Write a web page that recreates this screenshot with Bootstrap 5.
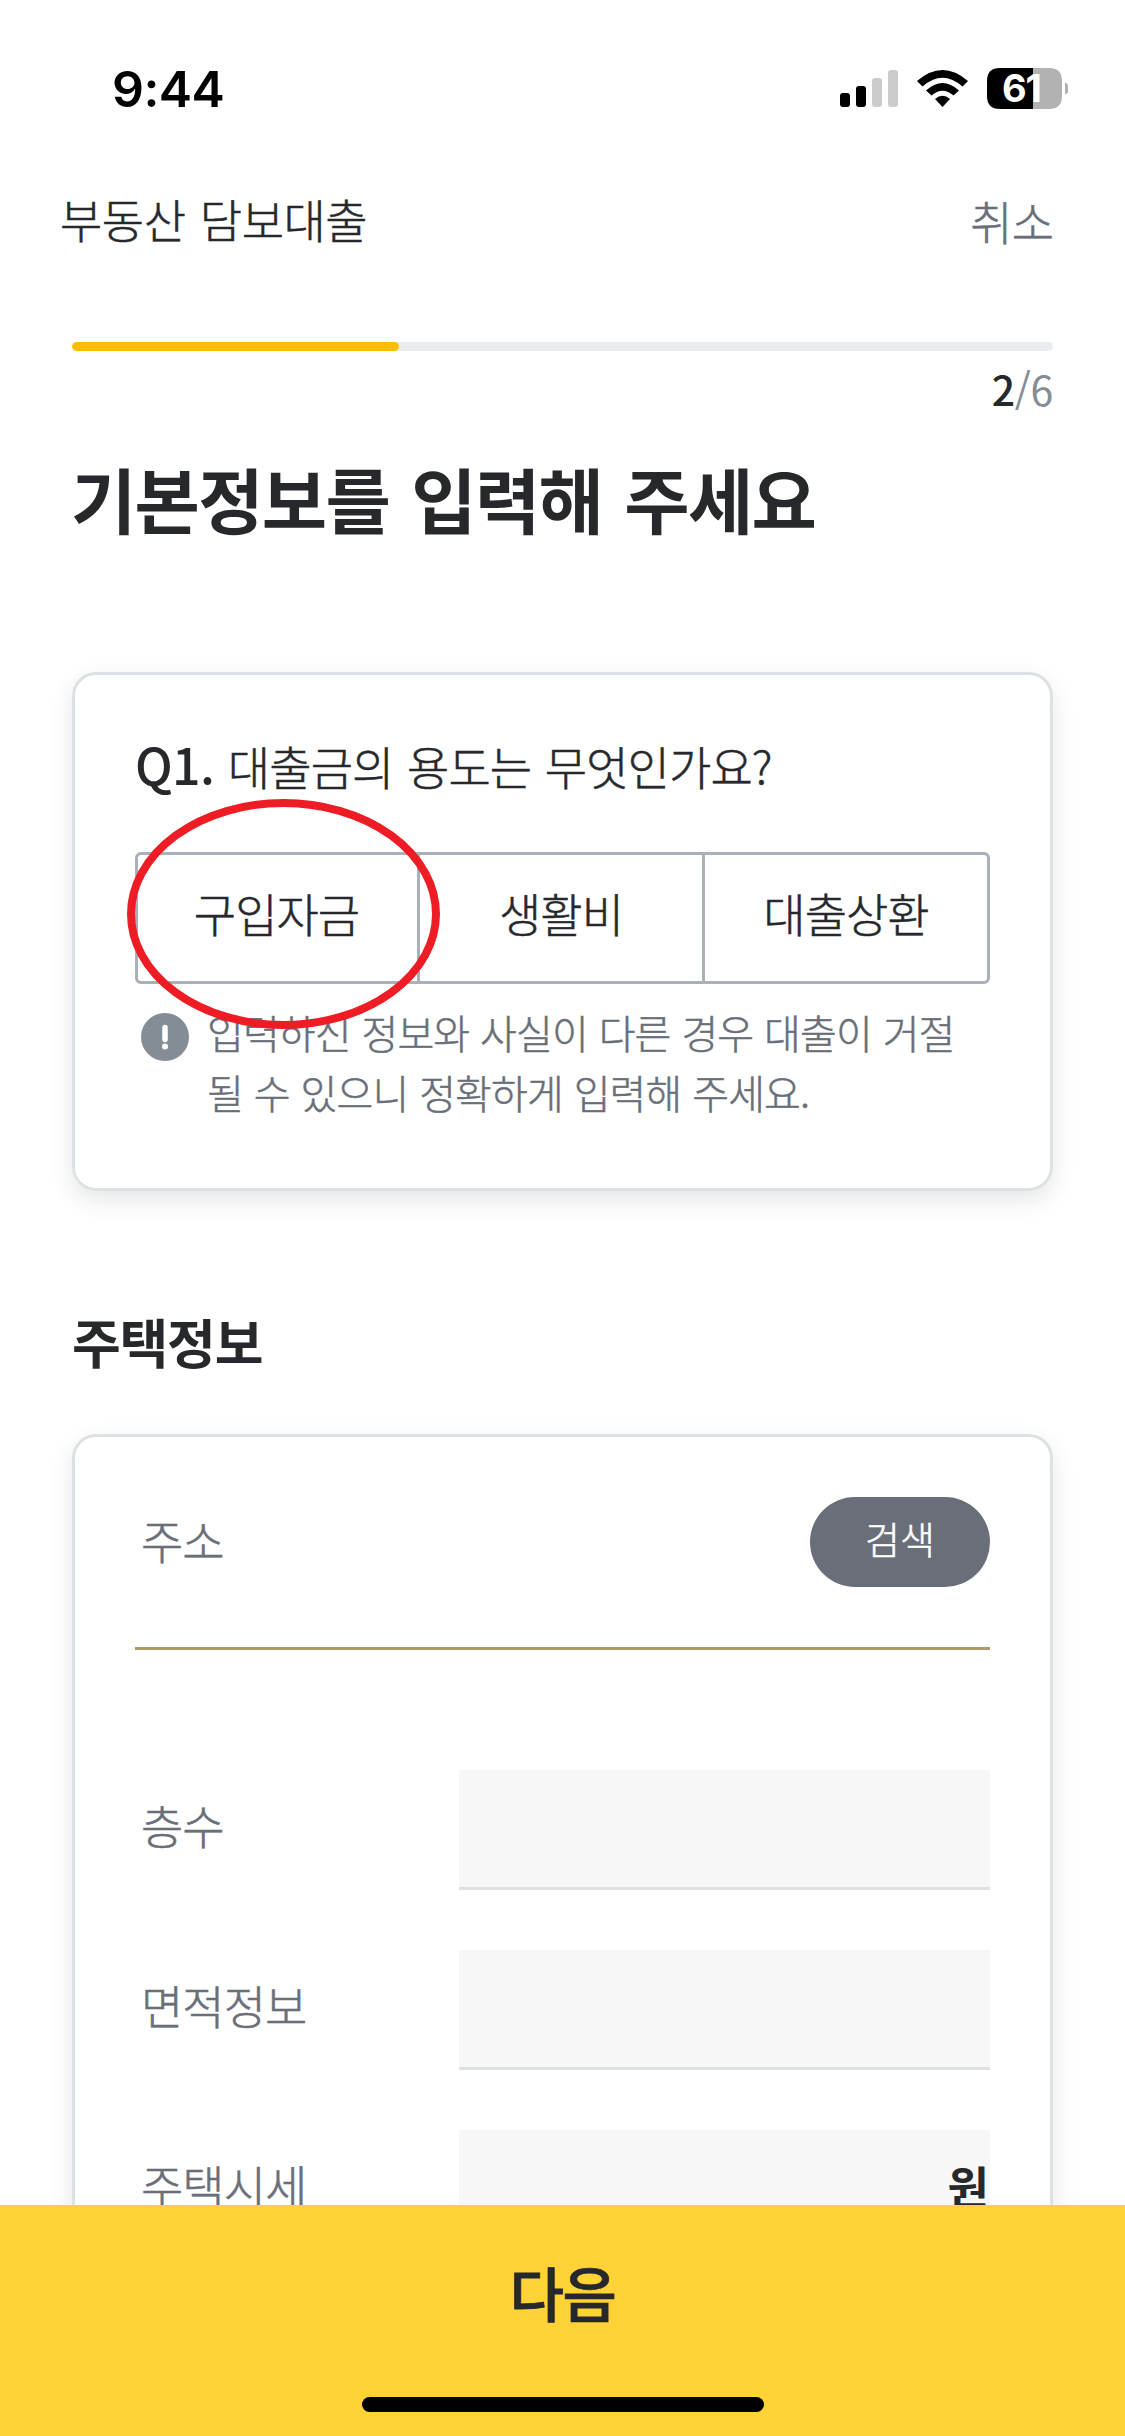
<!DOCTYPE html>
<html lang="ko">
<head>
<meta charset="utf-8">
<meta name="viewport" content="width=device-width, initial-scale=1">
<title>부동산 담보대출</title>
<link href="https://cdn.jsdelivr.net/npm/bootstrap@5.3.0/dist/css/bootstrap.min.css" rel="stylesheet">
<style>
  body { font-family: "Noto Sans CJK KR", "Noto Sans", sans-serif; color: #26282c; background: #fff; }
  .screen { width: 1125px; height: 2436px; }
  .ko { white-space: nowrap; font-weight: 300; }
  .thin { -webkit-text-stroke: .5px currentColor; }
  .statusbar { height: 177px; padding: 0 57px 0 112px; }
  .clock { font: 600 50px/60px Inter, sans-serif; color: #000; margin-top: 59px; letter-spacing: -.6px; }
  .status-icons { margin-top: 60px; }
  .appbar { height: 90px; padding: 0 72px 7px 60px; }
  .appbar .ko { font-size: 46px; line-height: 83px; letter-spacing: -.5px; word-spacing: 2px; }
  .appbar .tone-gray { letter-spacing: -1px; padding-top: 3px; }
  .tone-gray { color: #696e78; }
  .content { padding: 75px 72px 0; }
  .steps { height: 9px; border-radius: 5px; background: #e9edf0; }
  .steps .progress-bar { background: #ffbc00; border-radius: 5px; }
  .counter { font: 400 41px/60px "Noto Sans CJK KR", sans-serif; height: 60px; margin-top: 7px; color: #848c96; letter-spacing: -.3px; }
  .counter b { color: #26282c; font-weight: 500; }
  .headline { font-size: 71px; line-height: 100px; font-weight: 700; margin: 29px 0 0 -1px; letter-spacing: -1.7px; word-spacing: 4px; }
  .panel { border: 3px solid #dde1e4; border-radius: 24px; box-shadow: 0 9px 24px rgba(0,0,0,.1); padding: 0 60px; }
  .panel-question { height: 519px; margin-top: 125px; }
  .question { font-size: 46px; line-height: 70px; margin-top: 55px; letter-spacing: -.9px; word-spacing: 1.5px; }
  .question b { font-weight: 500; font-size: 50px; line-height: 1; letter-spacing: -.6px; -webkit-text-stroke: 0; }
  .choices { height: 132px; margin-top: 52px; }
  .choices .btn { border: 3px solid #a9b0ba; border-radius: 6px; font-size: 46px; letter-spacing: -1px; font-weight: 300; color: #26282c; padding: 0 0 12px; flex: 1 1 0; }
  .choices .btn:first-child { flex: 0 0 285px; padding-right: 2px; }
  .choices.btn-group > .btn:not(:first-child) { margin-left: -3px; }
  .ring { left: 123px; top: 795px; }
  .notice { margin-top: 18px; padding-left: 6px; gap: 18px; }
  .notice svg { margin-top: 11px; }
  .notice .ko { font-size: 40px; line-height: 60px; letter-spacing: -.9px; word-spacing: .6px; }
  .section-title { font-size: 53px; line-height: 80px; font-weight: 700; margin-top: 110px; letter-spacing: -1.2px; }
  .panel-form { margin-top: 53px; height: 1100px; }
  .field-label { font-size: 46px; line-height: 84px; letter-spacing: -1px; padding-left: 6px; color: #696e78; }
  .address { padding-top: 60px; height: 210px; }
  .address-wrap { border-bottom: 3px solid #b0986a; margin-bottom: 120px; }
  .search { width: 180px; height: 90px; border-radius: 45px; background: #696e78; color: #fff; font-size: 38px; font-weight: 300; padding: 0 0 8px; line-height: 76px; }
  .entry { height: 120px; margin-bottom: 60px; }
  .entry .field-label { padding-bottom: 13px; }
  .entry .box { width: 531px; background: #f7f7f7; border-bottom: 3px solid #dde1e4; }
  .unit { font-size: 45px; font-weight: 700; padding: 0 1px 5px 0; }
  .footer-bar { height: 231px; background: #ffd235; }
  .footer-bar .next { font-size: 59px; font-weight: 500; line-height: 90px; margin-top: 42px; letter-spacing: -1.5px; -webkit-text-stroke: .8px currentColor; }
  .home { width: 402px; height: 15px; border-radius: 8px; background: #000; margin-top: 60px; }
</style>
</head>
<body>
<div class="screen position-relative overflow-hidden">
  <header>
    <div class="statusbar d-flex justify-content-between align-items-start">
      <div class="clock">9:44</div>
      <svg class="status-icons" width="230" height="56" viewBox="838 60 230 56">
        <rect x="840" y="93" width="10" height="14" rx="3"/>
        <rect x="856" y="86" width="10" height="21" rx="3"/>
        <rect x="872" y="78" width="10" height="29" rx="3" fill="#ccc"/>
        <rect x="888" y="70" width="10" height="37" rx="3" fill="#ccc"/>
        <path d="M917 81Q942.500 59 968 81L962.500 86.500Q942.500 69 922.500 86.500Z"/>
        <path d="M926 90.500Q942.500 75.500 959 90.500L953.500 95.500Q942.500 86 931.500 95.500Z"/>
        <path d="M935 99Q942.500 92.500 950 99L942.500 107Z"/>
        <path d="M1000 68H1033V109H1000Q987 109 987 96V81Q987 68 1000 68Z"/>
        <path d="M1033 68H1049Q1062 68 1062 81V96Q1062 109 1049 109H1033Z" fill="#b2b2b2"/>
        <path d="M1065 82.500Q1069 84 1069 88.500T1065 94.500Z" fill="#b2b2b2"/>
        <text x="1002" y="102" font-family="Inter, sans-serif" font-size="38" font-weight="700" fill="#fff" textLength="40">61</text>
      </svg>
    </div>
    <nav class="appbar d-flex justify-content-between align-items-center">
      <span class="ko thin">부동산 담보대출</span>
      <span class="ko thin tone-gray">취소</span>
    </nav>
  </header>

  <main class="content">
    <div class="progress steps"><div class="progress-bar" style="width:33.3%"></div></div>
    <div class="counter text-end"><b>2</b>/6</div>
    <h1 class="ko headline">기본정보를 입력해 주세요</h1>

    <section class="panel panel-question d-flex flex-column">
      <div class="ko thin question"><b>Q1.</b> 대출금의 용도는 무엇인가요?</div>
      <div class="btn-group choices">
        <button class="btn thin" type="button">구입자금</button>
        <button class="btn thin" type="button">생활비</button>
        <button class="btn thin" type="button">대출상환</button>
      </div>
      <div class="notice d-flex align-items-start tone-gray">
        <svg width="48" height="48" viewBox="0 0 48 48"><circle cx="24" cy="24" r="24" fill="#848c96"/><path d="M24 14.500V26.500" stroke="#fff" stroke-width="5.500" stroke-linecap="round"/><circle cx="24" cy="33.500" r="3" fill="#fff"/></svg>
        <div class="ko thin">입력하신 정보와 사실이 다른 경우 대출이 거절<br>될 수 있으니 정확하게 입력해 주세요.</div>
      </div>
    </section>

    <h2 class="ko section-title mb-0">주택정보</h2>
    <section class="panel panel-form">
      <div class="address-wrap">
        <div class="address d-flex justify-content-between align-items-start">
          <span class="ko thin field-label">주소</span>
          <button class="btn thin search" type="button">검색</button>
        </div>
      </div>
      <div class="entry d-flex justify-content-between align-items-center"><span class="ko thin field-label">층수</span><div class="box h-100"></div></div>
      <div class="entry d-flex justify-content-between align-items-center"><span class="ko thin field-label">면적정보</span><div class="box h-100"></div></div>
      <div class="entry d-flex justify-content-between align-items-center"><span class="ko thin field-label">주택시세</span><div class="box h-100 d-flex justify-content-end align-items-center"><span class="unit">원</span></div></div>
    </section>
  </main>

  <svg class="ring position-absolute" width="321" height="238" viewBox="0 0 321 238"><ellipse cx="160.500" cy="119" rx="152.500" ry="111" fill="none" stroke="#ee1c24" stroke-width="8"/></svg>

  <footer class="footer-bar position-absolute bottom-0 start-0 w-100 d-flex flex-column align-items-center">
    <div class="ko next">다음</div>
    <div class="home"></div>
  </footer>
</div>
<script src="https://cdn.jsdelivr.net/npm/bootstrap@5.3.0/dist/js/bootstrap.bundle.min.js"></script>
</body>
</html>
